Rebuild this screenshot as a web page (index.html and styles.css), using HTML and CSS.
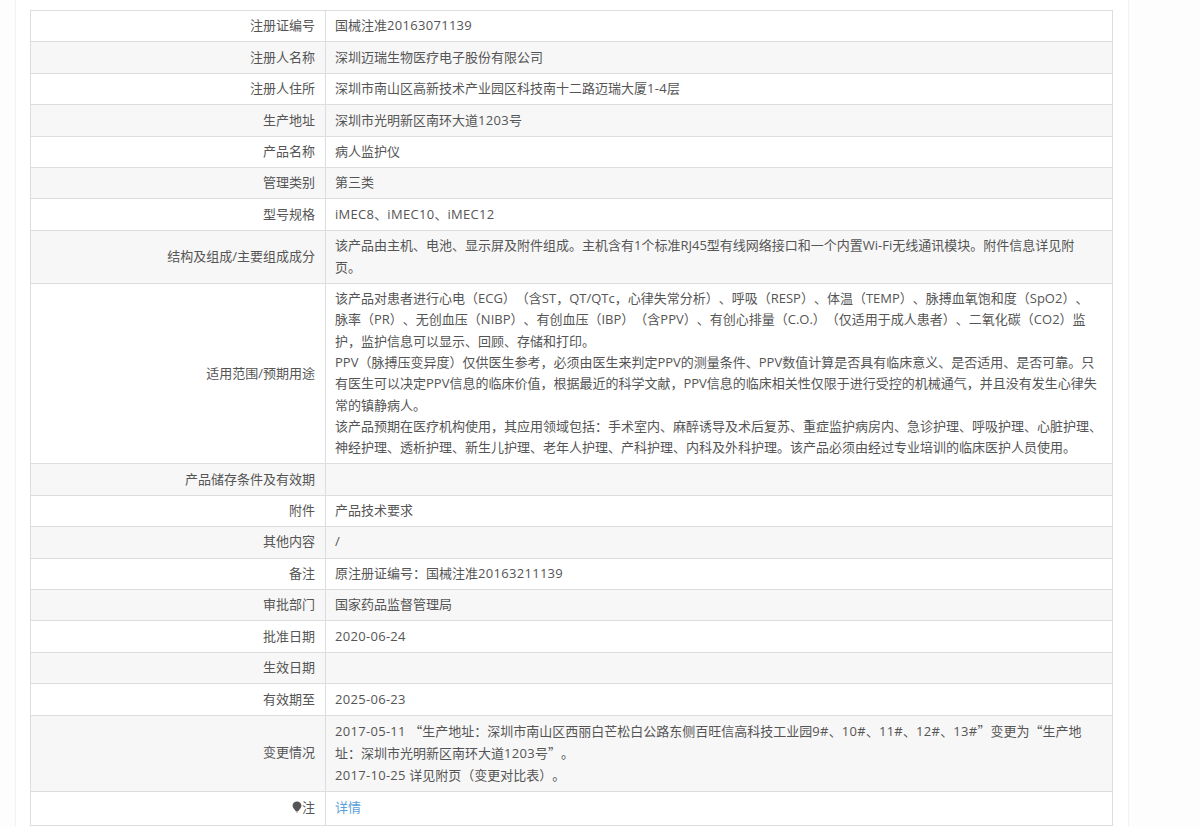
FILE: index.html
```html
<!DOCTYPE html>
<html lang="zh-CN">
<head>
  <meta charset="UTF-8">
  <title>注册证详情</title>
  <link rel="stylesheet" href="styles.css">
</head>
<body>

  <div class="container">
    <table class="info">
      <tr><th>注册证编号</th><td>国械注准<span class="num">20163071139</span></td></tr>
      <tr class="alt"><th>注册人名称</th><td>深圳迈瑞生物医疗电子股份有限公司</td></tr>
      <tr><th>注册人住所</th><td>深圳市南山区高新技术产业园区科技南十二路迈瑞大厦<span class="num">1-4</span>层</td></tr>
      <tr class="alt"><th>生产地址</th><td>深圳市光明新区南环大道<span class="num">1203</span>号</td></tr>
      <tr><th>产品名称</th><td>病人监护仪</td></tr>
      <tr class="alt"><th>管理类别</th><td>第三类</td></tr>
      <tr><th>型号规格</th><td><span class="num">iMEC8</span>、<span class="num">iMEC10</span>、<span class="num">iMEC12</span></td></tr>
      <tr class="alt"><th>结构及组成/主要组成成分</th><td>该产品由主机、电池、显示屏及附件组成。主机含有1个标准RJ45型有线网络接口和一个内置Wi-Fi无线通讯模块。附件信息详见附<br>页。</td></tr>
      <tr>
        <th>适用范围/预期用途</th>
        <td>该产品对患者进行心电（ECG）（含ST，QT/QTc，心律失常分析）、呼吸（RESP）、体温（TEMP）、脉搏血氧饱和度（SpO2）、<br>脉率（PR）、无创血压（NIBP）、有创血压（IBP）（含PPV）、有创心排量（C.O.）（仅适用于成人患者）、二氧化碳（CO2）监<br>护，监护信息可以显示、回顾、存储和打印。<br>PPV（脉搏压变异度）仅供医生参考，必须由医生来判定PPV的测量条件、PPV数值计算是否具有临床意义、是否适用、是否可靠。只有医生可以决定PPV信息的临床价值，根据最近的科学文献，PPV信息的临床相关性仅限于进行受控的机械通气，并且没有发生心律失常的镇静病人。<br>该产品预期在医疗机构使用，其应用领域包括：手术室内、麻醉诱导及术后复苏、重症监护病房内、急诊护理、呼吸护理、心脏护理、神经护理、透析护理、新生儿护理、老年人护理、产科护理、内科及外科护理。该产品必须由经过专业培训的临床医护人员使用。</td>
      </tr>
      <tr class="alt"><th>产品储存条件及有效期</th><td></td></tr>
      <tr><th>附件</th><td>产品技术要求</td></tr>
      <tr class="alt"><th>其他内容</th><td>/</td></tr>
      <tr><th>备注</th><td>原注册证编号：国械注准<span class="num">20163211139</span></td></tr>
      <tr class="alt"><th>审批部门</th><td>国家药品监督管理局</td></tr>
      <tr><th>批准日期</th><td><span class="num">2020-06-24</span></td></tr>
      <tr class="alt"><th>生效日期</th><td></td></tr>
      <tr><th>有效期至</th><td><span class="num">2025-06-23</span></td></tr>
      <tr class="alt"><th>变更情况</th><td><span class="num">2017-05-11</span> <span class="cjk">“</span>生产地址：深圳市南山区西丽白芒松白公路东侧百旺信高科技工业园<span class="num">9#</span>、<span class="num">10#</span>、<span class="num">11#</span>、<span class="num">12#</span>、<span class="num">13#</span><span class="cjk">”</span>变更为<span class="cjk">“</span>生产地址：深圳市光明新区南环大道<span class="num">1203</span>号<span class="cjk">”</span>。<br><span class="num">2017-10-25</span> 详见附页（变更对比表）。</td></tr>
      <tr class="last">
        <th><svg class="bulb" viewBox="0 0 10 12"><path d="M5 .5C2.400.5.600 2.300.600 4.700c0 1.900 1.300 3 2.200 4l.7 1.300h3l.7-1.300c.9-1 2.200-2.100 2.200-4C9.400 2.300 7.600.5 5 .5z"/><path d="M3.800 10.600h2.400L5 11.800z"/></svg>注</th>
        <td><a href="#">详情</a></td>
      </tr>
    </table>
  </div>

</body>
</html>
```

FILE: styles.css
```css
*{box-sizing:border-box}
html,body{margin:0;padding:0;height:100%;overflow:hidden}
body{
  background:#fdfdfd;color:#555;
  font-family:"Open Sans","Noto Sans CJK SC",sans-serif;font-size:13px;
  text-spacing-trim:space-all
}
.container{
  width:1112px;height:100%;margin-left:16px;padding:10px 15px 0 14px;
  background:#fff;box-shadow:0 0 2px #ddd
}
.info{width:100%;border-collapse:collapse;table-layout:fixed;line-height:21.33px}
.info th,.info td{border:1px solid #ddd;padding:4.4px 10px 4.7px 9px}
.info th{width:295px;font-weight:400;text-align:right}
.info .alt{background:#f7f7f7}
.info .last th,.info .last td{padding-top:5.4px;padding-bottom:6.6px}
.info a{color:#5a9fd8;text-decoration:none}
.num{letter-spacing:.3px}
.cjk{font-family:"Noto Sans CJK SC",sans-serif}
.bulb{width:10px;height:12px;vertical-align:-1px;fill:#555}
```
